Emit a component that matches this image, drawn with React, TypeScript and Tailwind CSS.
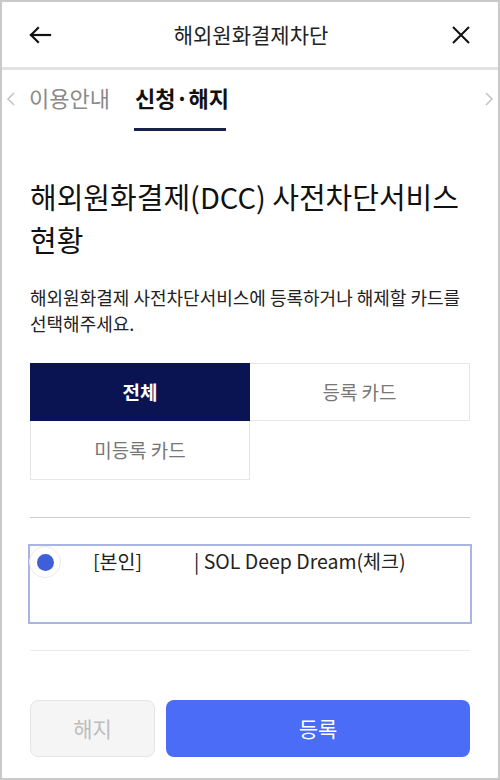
import React from "react";

export default function App() {
  const font = { fontFamily: '"Noto Sans CJK KR", "Noto Sans", sans-serif' };
  return (
    <div style={font} className="w-[500px] h-[780px] border-2 border-[#c9c9c9] bg-white flex flex-col overflow-hidden text-[#111]">
      {/* header */}
      <div className="h-[65px] flex items-center justify-between px-[26px] shrink-0">
        <svg width="24" height="20" viewBox="0 0 24 20" fill="none" stroke="#111" strokeWidth="2.2" strokeLinecap="square">
          <path d="M3 10 H22" />
          <path d="M10 3 L3 10 L10 17" />
        </svg>
        <div className="text-[21px] leading-none text-[#222]">해외원화결제차단</div>
        <svg width="22" height="22" viewBox="0 0 22 22" fill="none" stroke="#111" strokeWidth="2">
          <path d="M3 3 L19 19 M19 3 L3 19" />
        </svg>
      </div>
      <div className="h-[3px] bg-[#e2e2e2] shrink-0" />
      {/* tabs */}
      <div className="relative h-[61px] shrink-0 flex items-start">
        <svg className="absolute left-[4px] top-[21px]" width="10" height="16" viewBox="0 0 10 16" fill="none" stroke="#c4c4c4" strokeWidth="1.6">
          <path d="M8 2 L2 8 L8 14" />
        </svg>
        <svg className="absolute right-[4px] top-[21px]" width="10" height="16" viewBox="0 0 10 16" fill="none" stroke="#c4c4c4" strokeWidth="1.6">
          <path d="M2 2 L8 8 L2 14" />
        </svg>
        <div className="ml-[27px] mt-[12px] text-[22px] leading-[30px] text-[#8a8a8a]">이용안내</div>
        <div className="ml-[24px] h-full flex flex-col justify-between">
          <div className="mt-[12px] text-[22px] leading-[30px] font-bold text-[#111] px-[1px]">신청·해지</div>
          <div className="h-[3px] w-[92px] bg-[#1a1f4e]" />
        </div>
      </div>
      {/* content */}
      <div className="px-[26px] flex flex-col">
        <div className="mt-[44px] ml-[2px] text-[29px] leading-[43px] text-[#111]">
          해외원화결제(DCC) 사전차단서비스<br />현황
        </div>
        <div className="mt-[23px] ml-[2px] text-[18px] leading-[26px] text-[#222]">
          해외원화결제 사전차단서비스에 등록하거나 해제할 카드를<br />선택해주세요.
        </div>
        <div className="mt-[27px] grid grid-cols-2 mx-[2px]">
          <div className="h-[58px] bg-[#0b1452] flex items-center justify-center text-white font-bold text-[19px]">전체</div>
          <div className="h-[58px] border border-[#e6e6e6] border-l-0 flex items-center justify-center text-[#777] text-[19px]">등록 카드</div>
          <div className="h-[59px] border border-[#e6e6e6] border-t-0 flex items-center justify-center text-[#777] text-[19px]">미등록 카드</div>
        </div>
        <div className="mt-[37px] h-px bg-[#c8ccd6] mx-[2px]" />
        <div className="mt-[26px] h-[80px] border-2 border-[#a8b5e2] flex items-start">
          <div className="-ml-[1px] w-[32px] h-[32px] rounded-full border border-[#efeae0] flex items-center justify-center">
            <div className="w-[17px] h-[17px] rounded-full bg-[#3f5fd9]" />
          </div>
          <div className="ml-[32px] mt-[2px] text-[19.5px] leading-[26px] text-[#222]">[본인]</div>
          <div className="ml-[52px] mt-[2px] text-[19.5px] leading-[26px] text-[#222]">| SOL Deep Dream(체크)</div>
        </div>
        <div className="mt-[26px] h-px bg-[#ebebeb] mx-[2px]" />
        <div className="mt-[49px] flex gap-[11px] mx-[2px]">
          <div className="w-[125px] h-[57px] rounded-[8px] bg-[#f5f5f5] border border-[#e5e5e5] flex items-center justify-center text-[#bdbdbd] text-[21px]">해지</div>
          <div className="flex-1 h-[57px] rounded-[8px] bg-[#4a6cf7] flex items-center justify-center text-white text-[21px]">등록</div>
        </div>
      </div>
    </div>
  );
}
